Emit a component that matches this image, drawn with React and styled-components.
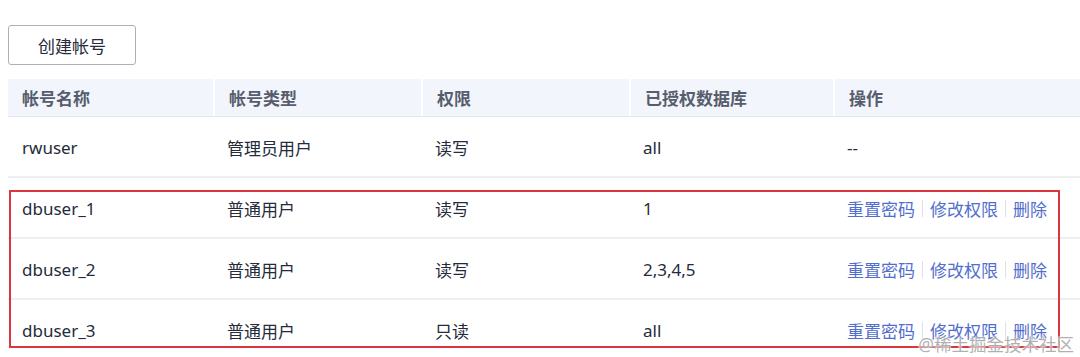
import React from 'react'
import styled, { createGlobalStyle } from 'styled-components'

const GlobalStyle = createGlobalStyle`
  html, body {
    margin: 0;
    padding: 0;
    background: #fff;
    overflow: hidden;
  }
  body {
    font-family: "Noto Sans", "Noto Sans CJK SC", sans-serif;
    color: #252b3a;
  }
`

const Page = styled.div`
  position: relative;
  width: 1080px;
  height: 357px;
  padding: 25px 0 0 8px;
  box-sizing: border-box;
`

const CreateButton = styled.button`
  display: block;
  width: 128px;
  height: 40px;
  border: 1px solid #adb0b8;
  border-radius: 3px;
  background: #fff;
  color: #252b3a;
  font-family: inherit;
  font-size: 17px;
  cursor: pointer;
`

const TableWrap = styled.div`
  position: relative;
  margin-top: 14px;
  width: 1072px;
`

const Row = styled.div`
  display: grid;
  grid-template-columns: 205px 208px 208px 204px 1fr;
  height: ${p => (p.head ? '38px' : '61px')};
  background: ${p => (p.head ? '#f2f5fc' : '#fff')};
  border-bottom: ${p => (p.head ? '1px solid #e4e8f2' : '2px solid #eeeff1')};
  box-sizing: border-box;
`

const Cell = styled.div`
  display: flex;
  align-items: center;
  padding: ${p => (p.head ? '0 15px' : '2px 15px 0')};
  font-size: 17px;
  font-weight: ${p => (p.head ? 700 : 400)};
  color: ${p => (p.head ? '#575d6c' : '#252b3a')};
  border-left: ${p => (p.head && !p.first ? '2px solid #fff' : 'none')};
  padding-left: ${p => (p.first ? '14px' : '14px')};
  white-space: nowrap;
`

const Actions = styled.div`
  display: flex;
  align-items: center;
`

const Action = styled.a`
  color: #526ecc;
  font-size: 17px;
  cursor: pointer;
`

const Divider = styled.span`
  display: inline-block;
  width: 1px;
  height: 17px;
  margin: 0 7px;
  background: #dfe1e6;
`

const Highlight = styled.div`
  position: absolute;
  left: 1px;
  top: 111px;
  width: 1051px;
  height: 158px;
  border: 2px solid #d9363e;
  box-sizing: border-box;
  pointer-events: none;
`

const Watermark = styled.div`
  position: absolute;
  right: 6px;
  bottom: 1px;
  font-size: 17.5px;
  color: rgba(150, 150, 150, 0.75);
  text-shadow: 0 0 2px #fff, 0 0 2px #fff;
  white-space: nowrap;
`

const columns = ['帐号名称', '帐号类型', '权限', '已授权数据库', '操作']

const users = [
  { name: 'rwuser', type: '管理员用户', perm: '读写', db: 'all', admin: true },
  { name: 'dbuser_1', type: '普通用户', perm: '读写', db: '1' },
  { name: 'dbuser_2', type: '普通用户', perm: '读写', db: '2,3,4,5' },
  { name: 'dbuser_3', type: '普通用户', perm: '只读', db: 'all' },
]

export default function App() {
  return (
    <>
      <GlobalStyle />
      <Page>
        <CreateButton>创建帐号</CreateButton>
        <TableWrap>
          <Row head>
            {columns.map((c, i) => (
              <Cell head first={i === 0} key={c}>{c}</Cell>
            ))}
          </Row>
          {users.map(u => (
            <Row key={u.name}>
              <Cell first>{u.name}</Cell>
              <Cell>{u.type}</Cell>
              <Cell>{u.perm}</Cell>
              <Cell>{u.db}</Cell>
              <Cell>
                {u.admin ? (
                  '--'
                ) : (
                  <Actions>
                    <Action>重置密码</Action>
                    <Divider />
                    <Action>修改权限</Action>
                    <Divider />
                    <Action>删除</Action>
                  </Actions>
                )}
              </Cell>
            </Row>
          ))}
          <Highlight />
        </TableWrap>
        <Watermark>@稀土掘金技术社区</Watermark>
      </Page>
    </>
  )
}
